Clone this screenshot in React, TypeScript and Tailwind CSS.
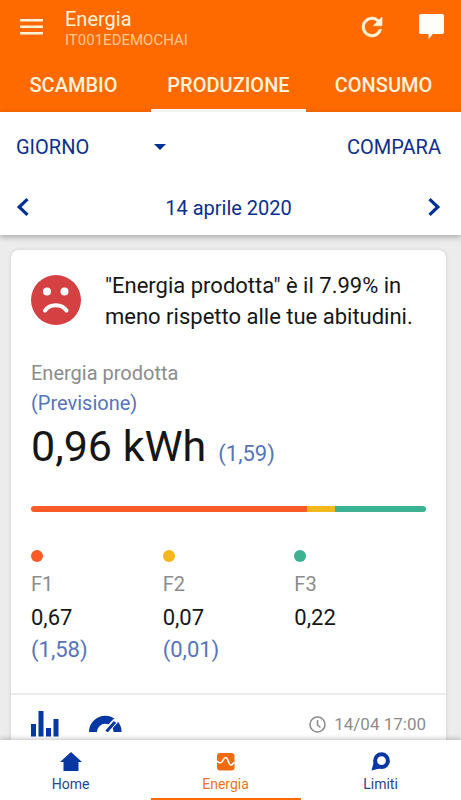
import React from 'react';

const bands = [
  { name: 'F1', value: '0,67', forecast: '(1,58)', color: 'bg-[#fa5a28]' },
  { name: 'F2', value: '0,07', forecast: '(0,01)', color: 'bg-[#f4b71c]' },
  { name: 'F3', value: '0,22', forecast: '', color: 'bg-[#3bb292]' },
];

const tabs = ['SCAMBIO', 'PRODUZIONE', 'CONSUMO'];

function Header() {
  return (
    <header className="shrink-0 bg-[#ff6a00] text-[#fff3dc]">
      <div className="flex h-14 items-start pl-5 pr-[17px]">
        <button type="button" aria-label="Menu" className="mt-[19px]">
          <svg width="23" height="16" viewBox="0 0 23 16" fill="#fff3dc">
            <path d="M0 0h23v2.500H0zM0 6.500h23V9H0zM0 13h23v2.500H0z" />
          </svg>
        </button>
        <div className="ml-[22px] flex-1 pt-2">
          <h1 className="text-[20px] leading-[22px]">Energia</h1>
          <p className="text-[15px] leading-5 text-[#ffc794]">IT001EDEMOCHAI</p>
        </div>
        <button type="button" aria-label="Aggiorna" className="mt-3">
          <svg width="30" height="30" viewBox="0 0 24 24" fill="#fff3dc" stroke="#fff3dc" strokeWidth="0.500">
            <path d="M17.650 6.350A7.960 7.960 0 0 0 12 4a8 8 0 1 0 7.730 10h-2.080A6 6 0 1 1 12 6c1.660 0 3.140.69 4.220 1.780L13 11h7V4z" />
          </svg>
        </button>
        <button type="button" aria-label="Messaggi" className="ml-8 mt-[14px]">
          <svg width="25" height="25" viewBox="0 0 25 25" fill="#fffdf8">
            <path d="M2 0h21a2 2 0 0 1 2 2v16a2 2 0 0 1-2 2H14l-4.500 5V20H2a2 2 0 0 1-2-2V2a2 2 0 0 1 2-2z" />
          </svg>
        </button>
      </div>
      <nav className="-ml-1 grid h-14 grid-cols-3">
        {tabs.map((tab) => (
          <button
            key={tab}
            type="button"
            className={
              tab === 'PRODUZIONE'
                ? 'border-b-3 border-white pt-1 text-[20px] font-medium'
                : 'border-b-3 border-transparent pt-1 text-[20px] font-medium'
            }
          >
            {tab}
          </button>
        ))}
      </nav>
    </header>
  );
}

function Period() {
  return (
    <section className="relative shrink-0 bg-white px-4 text-[20px] text-[#0b2f8a] shadow-[0_2px_6px_rgba(0,0,0,0.3)]">
      <div className="flex h-[70px] items-center justify-between">
        <div className="relative flex w-[150px] items-center">
          <select aria-label="Periodo" defaultValue="GIORNO" className="w-full appearance-none bg-transparent">
            <option>GIORNO</option>
            <option>MESE</option>
            <option>ANNO</option>
          </select>
          <svg width="12" height="6" viewBox="0 0 12 6" className="pointer-events-none absolute right-0" fill="#002f93">
            <path d="M0 0h12L6 6z" />
          </svg>
        </div>
        <button type="button" className="pr-1">COMPARA</button>
      </div>
      <div className="flex h-[53px] items-start justify-between">
        <button type="button" aria-label="Giorno precedente" className="py-4">
          <svg width="13" height="18" viewBox="0 0 13 18" fill="none" stroke="#002f93" strokeWidth="3.200">
            <path d="M11.500 1.200 3.200 9l8.300 7.800" />
          </svg>
        </button>
        <p className="py-3 leading-7">14 aprile 2020</p>
        <button type="button" aria-label="Giorno successivo" className="py-4 pr-1">
          <svg width="13" height="18" viewBox="0 0 13 18" fill="none" stroke="#002f93" strokeWidth="3.200">
            <path d="M1.500 1.200 9.800 9l-8.300 7.800" />
          </svg>
        </button>
      </div>
    </section>
  );
}

function EnergyCard() {
  return (
    <article className="ml-[11px] mr-[15px] mt-[15px] rounded-lg bg-white shadow-[0_0_4px_rgba(0,0,0,0.12)]">
      <div className="px-5 pt-5">
        <div className="flex items-start">
          <svg width="50" height="50" viewBox="0 0 50 50" className="mt-[5px] shrink-0">
            <circle cx="25" cy="25" r="25" fill="#d54042" />
            <circle cx="16" cy="16.500" r="4" fill="#fff" />
            <circle cx="33.500" cy="16.500" r="4" fill="#fff" />
            <path d="M14 35.500c5-7 16.500-7 21.500 0" fill="none" stroke="#fff" strokeWidth="4" strokeLinecap="round" />
          </svg>
          <p className="ml-6 text-[22px] leading-[31px] text-[#161616]">
            "Energia prodotta" è il 7.99% in meno rispetto alle tue abitudini.
          </p>
        </div>
        <div className="mt-[26px] text-[20px] leading-[30px]">
          <h2 className="text-[#8c8c8c]">Energia prodotta</h2>
          <p className="text-[#5674b9]">(Previsione)</p>
        </div>
        <p className="flex items-baseline gap-3 leading-[56px]">
          <span className="text-[43px] text-[#161616]">0,96 kWh</span>
          <span className="text-[22px] text-[#5674b9]">(1,59)</span>
        </p>
        <div className="mt-6 flex h-[6px] overflow-hidden rounded-full">
          <span className="grow-67 bg-[#fa5a28]" />
          <span className="grow-7 bg-[#f4b71c]" />
          <span className="grow-22 bg-[#3bb292]" />
        </div>
        <div className="mt-[38px] grid grid-cols-3 pb-[27px]">
          {bands.map((band) => (
            <div key={band.name}>
              <span className={`block size-3 rounded-full ${band.color}`} />
              <h3 className="mt-2 text-[20px] leading-7 text-[#8c8c8c]">{band.name}</h3>
              <p className="mt-1 text-[22px] leading-8 text-[#161616]">{band.value}</p>
              <p className="text-[22px] leading-8 text-[#5674b9]">{band.forecast}</p>
            </div>
          ))}
        </div>
      </div>
      <footer className="flex items-start border-t-2 border-[#ececec] px-5 pb-4 pt-4">
        <button type="button" aria-label="Grafico">
          <svg width="29" height="26" viewBox="0 0 29 26" fill="#0637a3">
            <path d="M0 13h5v12.500H0zM7.500 0h5v25.500h-5zM15 17h5v8.500h-5zM22.500 8h5v17.500h-5z" />
          </svg>
        </button>
        <button type="button" aria-label="Indicatore" className="ml-[29px] mt-1">
          <svg width="33" height="17" viewBox="0 0 33 17">
            <path d="M0 17a16.300 16.300 0 0 1 32.600 0h-8a8.300 8.300 0 0 0-16.600 0z" fill="#0637a3" />
            <path d="M19 14 26 6.500" stroke="#fff" strokeWidth="5.500" strokeLinecap="round" />
            <path d="M17.500 16.500 26 7" stroke="#0637a3" strokeWidth="3" />
          </svg>
        </button>
        <time className="ml-auto flex items-center gap-2 text-[17px] leading-[26px] text-[#8c8c8c]">
          <svg width="17" height="17" viewBox="0 0 17 17" fill="none" stroke="#8c8c8c" strokeWidth="1.600">
            <circle cx="8.500" cy="8.500" r="7.500" />
            <path d="M8.500 4v5l3 2.500" />
          </svg>
          14/04 17:00
        </time>
      </footer>
    </article>
  );
}

function BottomNav() {
  return (
    <nav className="relative h-[60px] shrink-0 bg-white pr-[3px] text-[14px] text-[#24478f] shadow-[0_-1px_5px_rgba(0,0,0,0.25)]">
      <div className="-ml-[7px] grid h-full grid-cols-3">
        <a href="#home" className="flex flex-col items-center pt-3">
          <svg width="22" height="19" viewBox="0 0 22 19" fill="#0637a3">
            <path d="M11 0 22 10h-3.500v9h-15v-9H0z" />
          </svg>
          <span className="mt-[3px] leading-5">Home</span>
        </a>
        <a href="#energia" aria-current="page" className="flex flex-col items-center pt-3 text-[#ec7420]">
          <svg width="19" height="19" viewBox="0 0 19 19">
            <rect x="1" y="1" width="17.500" height="17.500" rx="3" fill="#f06a0e" />
            <path d="M1 9c1.500 1.800 3.500 2.500 5 .8 1.500-2 2-4.300 3.800-4.300 2.400 0 2.400 7.500 5.200 7.500 1.800 0 1.800-2 3.500-2.500" fill="none" stroke="#fff" strokeWidth="1.600" />
          </svg>
          <span className="mt-[3px] leading-5">Energia</span>
          <span className="mt-auto h-[2px] w-[150px] bg-[#ff6a00]" />
        </a>
        <a href="#limiti" className="flex flex-col items-center pt-3">
          <svg width="19" height="19" viewBox="0 0 19 19">
            <circle cx="10.500" cy="8.700" r="6.400" fill="none" stroke="#0637a3" strokeWidth="4" />
            <path d="M.5 18.500 2.500 11l6 5.500z" fill="#0637a3" />
          </svg>
          <span className="mt-[3px] leading-5">Limiti</span>
        </a>
      </div>
    </nav>
  );
}

export default function App() {
  return (
    <div className="flex h-screen flex-col overflow-hidden bg-[#ececec] font-[Roboto,sans-serif]">
      <Header />
      <Period />
      <main className="min-h-0 flex-1 overflow-hidden">
        <EnergyCard />
      </main>
      <BottomNav />
    </div>
  );
}
